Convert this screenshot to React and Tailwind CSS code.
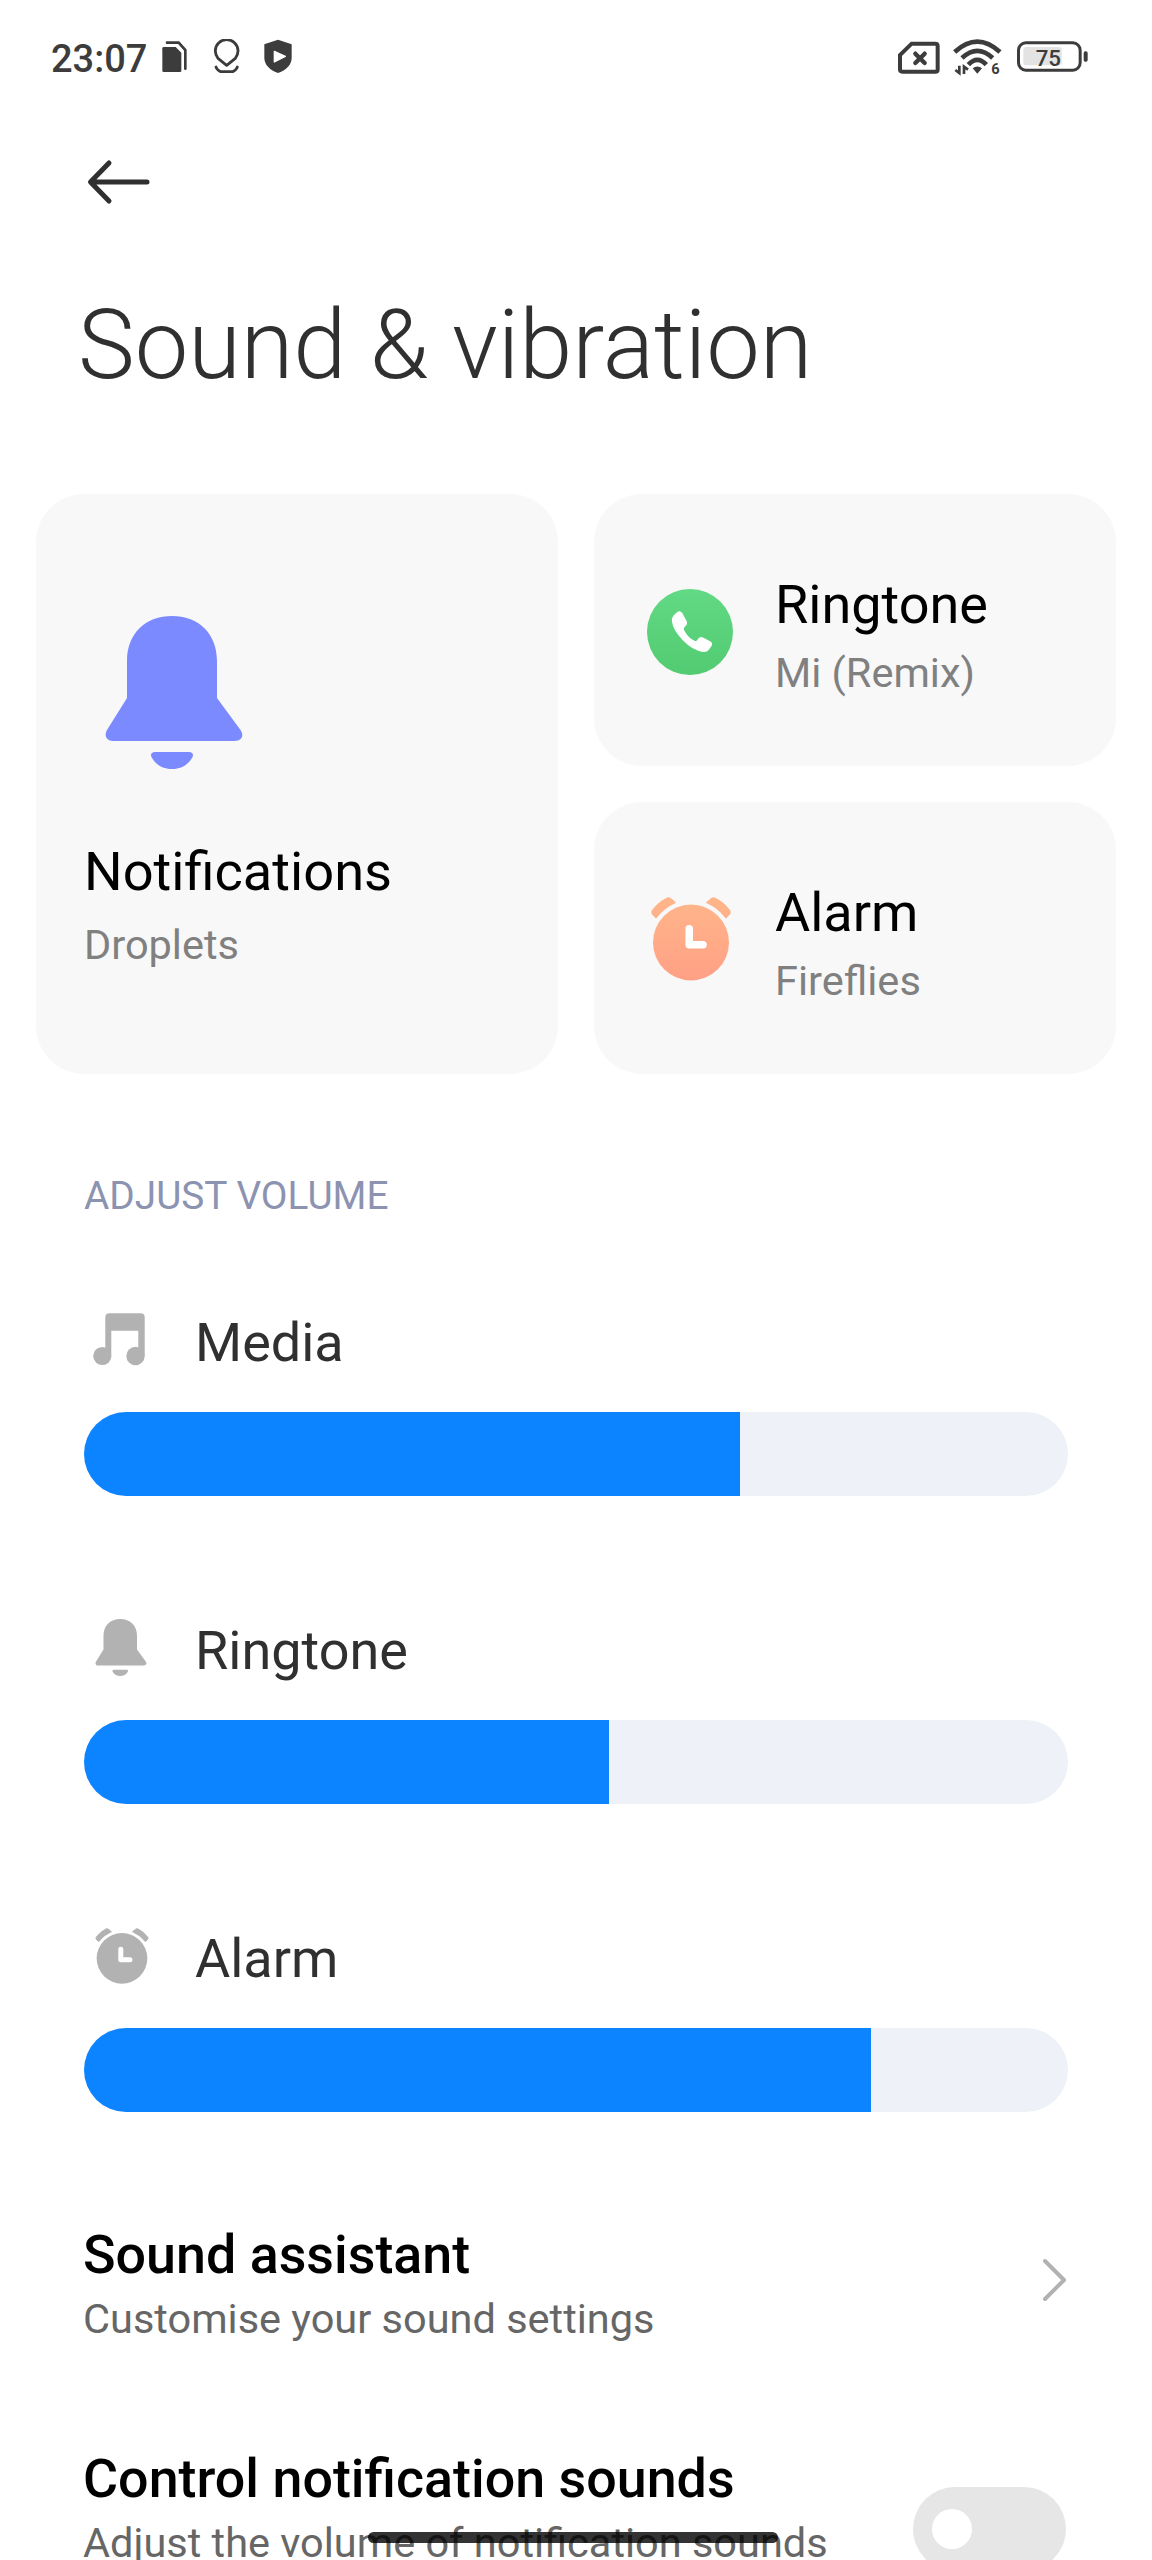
import React from "react";

const volumes = [
  { label: "Media", value: 10, icon: MusicIcon },
  { label: "Ringtone", value: 8, icon: SmallBell },
  { label: "Alarm", value: 12, icon: SmallAlarm },
];
const MAX_VOLUME = 15;

function BellIcon({ className }) {
  return (
    <svg viewBox="0 0 138 153" className={className} fill="currentColor">
      <path d="M22 45C22 17 41 0 67 0s45 17 45 45v37l23.500 32c4 6 1 11-6 11H8c-7 0-9-6-6-11l20-32z" />
      <path d="M50 136h34c4 0 5 3 3 6-4 7-11 11-20 11s-16-4-20-11c-2-3-1-6 3-6z" />
    </svg>
  );
}

function AlarmIcon({ className, gradient }) {
  const color = gradient ? "url(#alarmFill)" : "currentColor";
  return (
    <svg viewBox="0 0 80 84" className={className}>
      {gradient && (
        <defs>
          <linearGradient id="alarmFill" gradientUnits="userSpaceOnUse" x1="0" y1="0" x2="0" y2="84">
            <stop offset="0" stopColor="#ffb68a" />
            <stop offset="1" stopColor="#ffa085" />
          </linearGradient>
        </defs>
      )}
      <circle cx="40" cy="45.500" r="38" fill={color} />
      <path
        d="M1.200 14Q7.500 5.500 16.500 1.200Q18.500 .800 20 2.200L24 5.500Q12.500 10.500 5 20.500L1.200 16.500ZM78.800 14Q72.500 5.500 63.500 1.200Q61.500 .800 60 2.200L56 5.500Q67.500 10.500 75 20.500L78.800 16.500Z"
        fill={color}
        stroke={color}
        strokeWidth="1.5"
        strokeLinejoin="round"
      />
      <path
        d="M38.200 31.700v16H52"
        fill="none"
        stroke="#fff"
        strokeWidth="7.5"
        strokeLinecap="round"
        strokeLinejoin="round"
      />
    </svg>
  );
}

function PhoneIcon({ className }) {
  return (
    <svg viewBox="0 0 88 88" className={className}>
      <defs>
        <linearGradient id="phoneFill" x1="0" y1="0" x2="0" y2="1">
          <stop offset="0" stopColor="#62d984" />
          <stop offset="1" stopColor="#52cb72" />
        </linearGradient>
      </defs>
      <circle cx="44" cy="45" r="43" fill="url(#phoneFill)" />
      <path
        d="M28 28L31 25.3Q34 23 36.3 26L40.6 34Q42 37 39.5 39Q37 41 38 43Q42 51 49 54Q51 54.6 52 52Q54 49 57 50.5L64.5 54.5Q67 56 65.5 59L63 62.5Q61 65.5 57 65Q46 63 37 53.5Q27 43 26 35Q25.3 31 28 28Z"
        fill="#fff"
      />
    </svg>
  );
}

function MusicIcon() {
  return (
    <svg viewBox="0 0 68 64" className="w-[68px] h-16" fill="currentColor">
      <path d="M21.3 7.3q0-4 4-4h31.400q4 0 4 4V46h-6.400V20.700H27.300V46h-6z" />
      <circle cx="18.3" cy="46" r="9.1" />
      <circle cx="51.5" cy="46" r="9.2" />
    </svg>
  );
}

function SmallBell() {
  return (
    <div className="w-[68px] h-16 pl-[11px] pt-px">
      <BellIcon className="w-[52px] h-[57px]" />
    </div>
  );
}

function SmallAlarm() {
  return (
    <div className="w-[68px] h-16 pl-[11px] pt-[2px]">
      <AlarmIcon className="w-[54px] h-[56px]" />
    </div>
  );
}

function StatusBar() {
  return (
    <div className="h-28 flex items-center pl-[51px] pr-[63px] text-[#3c3c3c]">
      <span className="w-[110px] mt-1.5 text-[38px] leading-[44px] font-medium">23:07</span>

      {/* copy */}
      <svg viewBox="0 0 81 105" className="w-[27px] h-[35px]">
        <path d="M8 24h36l17 17v54q0 4-4 4H8q-4 0-4-4V28q0-4 4-4z" fill="currentColor" />
        <path d="M18 11h35l20 22v56" fill="none" stroke="currentColor" strokeWidth="8" strokeLinecap="round" />
      </svg>

      {/* location */}
      <svg viewBox="0 0 90 105" className="w-[30px] h-[35px] ml-6" fill="none" stroke="currentColor" strokeWidth="8.5" strokeLinecap="round" strokeLinejoin="round">
        <path d="M44 79L18 58A34 34 0 1 1 70 58Z" />
        <path d="M12 84Q14 92 26 98H62Q74 92 76 84" />
      </svg>

      {/* shield */}
      <svg viewBox="0 0 90 105" className="w-[30px] h-[35px] ml-[21px]">
        <path d="M45 2L86 16V56Q86 86 45 102Q4 86 4 56V16Z" fill="currentColor" />
        <path d="M34 37L67 52L34 69Z" fill="#fff" stroke="#fff" strokeWidth="4" strokeLinejoin="round" />
      </svg>

      <div className="ml-auto flex items-center">
        {/* no sim */}
        <svg viewBox="0 0 132 105" className="w-11 h-[35px]" fill="none" stroke="currentColor" strokeWidth="12">
          <path d="M44 14H115Q122 14 122 21V92Q122 98 115 98H16Q9 98 9 91V48Z" />
          <path d="M55 44L83 72M83 44L55 72" strokeWidth="13" strokeLinecap="round" />
        </svg>

        {/* wifi 6 */}
        <svg viewBox="0 0 147 105" className="w-[49px] h-[35px] ml-3 overflow-visible">
          <g fill="none" stroke="currentColor" strokeWidth="14">
            <path d="M5 39Q73 -23 141 39" />
            <path d="M27 57Q73 14 119 57" />
            <path d="M46 77Q73 48 100 77" />
          </g>
          <path d="M59 88Q73 77 87 88L73 104Z" fill="currentColor" />
          <path d="M19 80V102L7 93M33 105V83L45 92" fill="none" stroke="currentColor" strokeWidth="8" />
          <text x="115" y="105" fontSize="44" fontWeight="700" fill="currentColor">6</text>
        </svg>

        {/* battery */}
        <svg viewBox="0 0 219 105" className="w-[73px] h-[35px] ml-3.5 overflow-visible">
          <rect x="22" y="24" width="115" height="55" rx="8" fill="#e3e3e3" />
          <rect x="7.5" y="11.5" width="185" height="82" rx="22" fill="none" stroke="currentColor" strokeWidth="9" />
          <rect x="203" y="37" width="12" height="31" rx="5" fill="currentColor" />
          <text x="59" y="81" fontSize="67" fontWeight="500" fill="currentColor">75</text>
        </svg>
      </div>
    </div>
  );
}

function SoundCard({ icon, title, subtitle }) {
  return (
    <div className="flex items-center rounded-[48px] bg-[#f8f8f8] pl-[52px]">
      {icon}
      <div className="ml-[41px] pt-3">
        <p className="text-[54px] leading-[64px] text-black">{title}</p>
        <p className="mt-2.5 text-[41.5px] leading-[52px] text-[#808080]">{subtitle}</p>
      </div>
    </div>
  );
}

function VolumeSlider({ label, value, icon: Icon }) {
  return (
    <div>
      <div className="flex text-[#b2b2b2]">
        <Icon />
        <span className="ml-[43px] pt-px text-[54px] leading-[64px] text-[#303030]">{label}</span>
      </div>
      <div className="mt-[37px] h-[84px] rounded-full bg-[#eef1f8] overflow-hidden">
        <div className="h-full bg-[#0d84ff]" style={{ width: `${(value / MAX_VOLUME) * 100}%` }} />
      </div>
    </div>
  );
}

export default function App() {
  return (
    <div className="relative w-[1152px] h-[2560px] overflow-hidden bg-white font-['Roboto',sans-serif]">
      <StatusBar />

      <header className="pl-[78px]">
        <svg viewBox="0 0 72 48" className="mt-[46px] w-[72px] h-12 ml-2" fill="none" stroke="#303030" strokeWidth="5" strokeLinecap="round" strokeLinejoin="round">
          <path d="M23 5L4.500 24L23 43M5 24H61" />
        </svg>
        <h1 className="mt-[83px] text-[95.6px] leading-[112px] font-light text-[#303030] whitespace-nowrap">
          Sound &amp; vibration
        </h1>
      </header>

      <section className="mt-[93px] px-9 h-[580px] grid grid-cols-2 grid-rows-2 gap-9">
        <div className="row-span-2 rounded-[48px] bg-[#f8f8f8] pl-12 pt-[122px]">
          <BellIcon className="ml-[21px] w-[138px] h-[153px] text-[#7c8aff]" />
          <p className="mt-[71px] text-[54.2px] leading-[64px] text-black">Notifications</p>
          <p className="mt-[15px] text-[41.5px] leading-[52px] text-[#808080]">Droplets</p>
        </div>
        <SoundCard icon={<PhoneIcon className="mt-0.5 w-[88px] h-[88px]" />} title="Ringtone" subtitle="Mi (Remix)" />
        <SoundCard icon={<AlarmIcon gradient className="ml-[5px] mr-[3px] mt-0.5 w-20 h-[84px]" />} title="Alarm" subtitle="Fireflies" />
      </section>

      <section className="mt-[98px] px-[84px]">
        <h2 className="text-[38.8px] leading-[48px] text-[#8c93b0]">ADJUST VOLUME</h2>
        <div className="mt-[90px] flex flex-col gap-[122px]">
          {volumes.map(v => (
            <VolumeSlider key={v.label} {...v} />
          ))}
        </div>
      </section>

      <section className="mt-[111px] pl-[83px] pr-[84px] flex flex-col gap-[102px]">
        <div className="flex items-center justify-between">
          <div>
            <p className="text-[53.8px] leading-[64px] font-medium text-black">Sound assistant</p>
            <p className="mt-1.5 text-[41.5px] leading-[52px] text-[#666]">Customise your sound settings</p>
          </div>
          <svg viewBox="0 0 28 48" className="w-7 h-12 mb-2" fill="none" stroke="#b2b2b2" strokeWidth="4" strokeLinecap="round" strokeLinejoin="round">
            <path d="M5 5L24 24L5 43" />
          </svg>
        </div>
        <div className="flex items-start justify-between">
          <div className="whitespace-nowrap">
            <p className="text-[53.8px] leading-[64px] font-medium text-black">Control notification sounds</p>
            <p className="mt-1.5 text-[41.5px] leading-[52px] text-[#666]">Adjust the volume of notification sounds</p>
          </div>
          <div className="mt-10 mr-0.5 w-[153px] h-[84px] shrink-0 rounded-full bg-[#e6e6e6] flex items-center pl-[19px]">
            <div className="w-10 h-10 rounded-full bg-white" />
          </div>
        </div>
      </section>

      {/* gesture bar */}
      <div className="absolute left-[368px] top-[2532px] w-[410px] h-[11px] rounded-full bg-black/80" />
    </div>
  );
}
